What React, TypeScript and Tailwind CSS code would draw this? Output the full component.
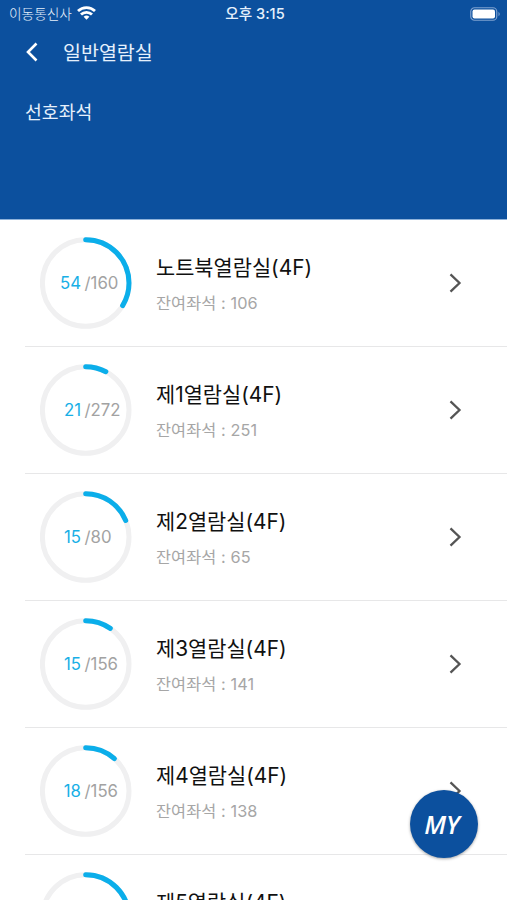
interface Room {
  name: string;
  used: number;
  total: number;
}

const rooms: Room[] = [
  { name: "노트북열람실(4F)", used: 54, total: 160 },
  { name: "제1열람실(4F)", used: 21, total: 272 },
  { name: "제2열람실(4F)", used: 15, total: 80 },
  { name: "제3열람실(4F)", used: 15, total: 156 },
  { name: "제4열람실(4F)", used: 18, total: 156 },
  { name: "제5열람실(4F)", used: 52, total: 156 },
];

function StatusBar() {
  return (
    <div className="grid h-[27px] grid-cols-3 items-center pl-[9px] pr-[6px]">
      <div className="flex items-center gap-[5px]">
        <span className="pt-px text-[13.7px] font-light">이동통신사</span>
        <svg width="19" height="14" viewBox="0 0 19 14" fill="none" stroke="#fff" strokeWidth="2.8">
          <path d="M1 5.1 A12.3 12.3 0 0 1 18 5.1" />
          <path d="M4 8.6 A7.8 7.8 0 0 1 15 8.6" />
          <path d="M6.6 10.8 A4.2 4.2 0 0 1 12.4 10.8 L9.5 13.7 Z" fill="#fff" stroke="none" />
        </svg>
      </div>
      <span className="pt-0.5 text-center text-[14.6px] font-medium">오후 3:15</span>
      <svg className="justify-self-end" width="31" height="14" viewBox="0 0 31 14">
        <rect x="0.75" y="0.75" width="26" height="12.5" rx="3.8" fill="none" stroke="#7ea1cf" strokeWidth="1.2" />
        <rect x="2.5" y="2.5" width="22.5" height="9" rx="2" fill="#fff" />
        <path d="M28.5 4.7 Q31 7 28.5 9.3 Z" fill="#7ea1cf" />
      </svg>
    </div>
  );
}

function SeatRing({ used, total }: { used: number; total: number }) {
  const percent = (used / total) * 100;

  return (
    <div className="relative h-[92px] w-[92px] shrink-0">
      <svg width="92" height="92" viewBox="0 0 92 92" fill="none" strokeWidth="5">
        <circle cx="45.7" cy="46" r="43.3" stroke="#f0f0f1" />
        <circle
          cx="45.7"
          cy="46"
          r="43.3"
          stroke="#0baeea"
          strokeLinecap="round"
          pathLength="100"
          strokeDasharray={`${percent} 100`}
          transform="rotate(-90 45.7 46)"
        />
      </svg>
      <div className="absolute inset-0 flex items-center pt-0.5 text-[16.8px]">
        <span className="w-[41px] text-right text-[#18afe6]">{used}</span>
        <span className="ml-[3.5px] text-[#a2a2a2]">/{total}</span>
      </div>
    </div>
  );
}

function RoomRow({ room }: { room: Room }) {
  return (
    <li className="ml-[25px] flex h-[127px] shrink-0 items-center border-b border-[#e7e7e8] pl-[15px] pr-[45px]">
      <SeatRing used={room.used} total={room.total} />
      <div className="ml-6 flex-1 pt-1">
        <p className="text-[20.85px] leading-[36px] text-[#111]">{room.name}</p>
        <p className="text-[16.3px] leading-[35px] tracking-[0.1px] text-[#a6a6a6]">잔여좌석 : {room.total - room.used}</p>
      </div>
      <svg width="13" height="20" viewBox="0 0 13 20" fill="none" stroke="#555" strokeWidth="2.3">
        <path d="M1.5 1.3 L10.5 10 L1.5 18.7" />
      </svg>
    </li>
  );
}

export default function App() {
  return (
    <div className="relative flex h-[900px] w-[507px] flex-col overflow-hidden bg-white font-['Inter','Noto_Sans_CJK_KR',sans-serif]">
      <header className="h-[220px] shrink-0 border-b border-[#8fb2da] bg-[#0c509e] text-[#e6f0fc]">
        <StatusBar />
        <div className="flex h-[50px] items-center pl-[26px]">
          <svg width="12" height="20" viewBox="0 0 12 20" fill="none" stroke="#fff" strokeWidth="2.6">
            <path d="M10.5 1.5 L2 10 L10.5 18.5" />
          </svg>
          <h1 className="ml-[25px] pt-[3px] text-[19.5px]">일반열람실</h1>
        </div>
        <h2 className="mt-[18px] pl-[25px] text-[18.3px] leading-[35px]">선호좌석</h2>
      </header>
      <ul className="flex flex-col">
        {rooms.map((room) => (
          <RoomRow key={room.name} room={room} />
        ))}
      </ul>
      <button className="absolute left-[410px] top-[790px] flex h-[68px] w-[68px] items-center justify-center rounded-full bg-[#0c509e] pr-1 font-['Open_Sans',sans-serif] text-[25.5px] font-semibold italic text-white shadow-[0_1px_3px_rgba(0,0,0,0.35)]">
        MY
      </button>
    </div>
  );
}
